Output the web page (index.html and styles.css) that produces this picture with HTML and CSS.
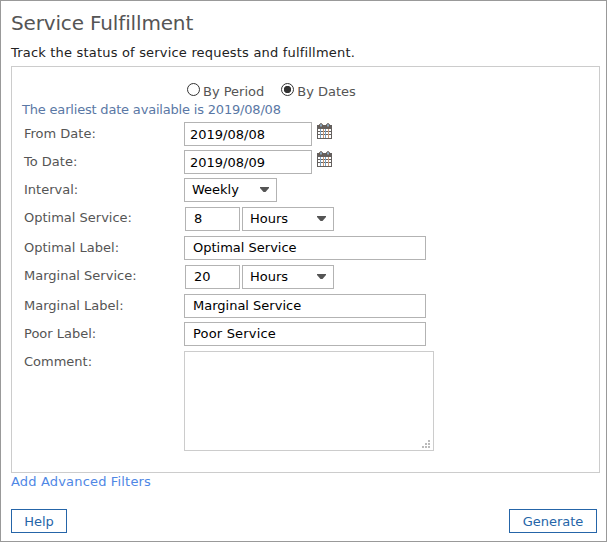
FILE: index.html
```html
<!DOCTYPE html>
<html lang="en">
<head>
<meta charset="utf-8">
<title>Service Fulfillment</title>
<link rel="stylesheet" href="styles.css">
</head>
<body>
<svg class="defs" width="0" height="0">
  <symbol id="calendar" viewBox="0 0 15 16">
    <path d="M0 2h15v14H0z" fill="#64605e"/>
    <path d="M1 6h2v2H1zM4 6h2v2H4zM7 6h1v2H7zM9 6h2v2H9zM12 6h2v2h-2zM1 9h2v2H1zM4 9h2v2H4zM7 9h1v2H7zM9 9h2v2H9zM12 9h2v2h-2zM1 12h2v3H1zM4 12h2v3H4zM7 12h1v3H7zM9 12h2v3H9zM12 12h2v3h-2z" fill="#fff"/>
    <path d="M6 6h1v9H6zM11 6h1v9h-1z" fill="#c99a78"/>
    <path d="M3 6h1v9H3zM8 6h1v9H8z" fill="#7aa2c4"/>
    <path d="M2.5 4V1.5q1.5-2 3 0V4zM9.5 4V1.5q1.5-2 3 0V4z" fill="#8aa9c2" stroke="#685a50"/>
  </symbol>
</svg>
<main class="window">
  <h1>Service Fulfillment</h1>
  <p class="intro">Track the status of service requests and fulfillment.</p>
  <form class="panel">
    <div class="modes">
      <label><span class="radio"></span><span>By Period</span></label>
      <label><span class="radio on"></span><span>By Dates</span></label>
    </div>
    <p class="note">The earliest date available is 2019/08/08</p>
    <div class="row"><span class="name">From Date:</span><span class="field date">2019/08/08</span><svg class="cal"><use href="#calendar"/></svg></div>
    <div class="row"><span class="name">To Date:</span><span class="field date">2019/08/09</span><svg class="cal"><use href="#calendar"/></svg></div>
    <div class="row tall"><span class="name">Interval:</span><span class="field select weekly">Weekly<svg class="arrow" viewBox="0 0 9 5"><path d="M0 0h9v1L5.5 5h-2L0 1z"/></svg></span></div>
    <div class="row tall service"><span class="name">Optimal Service:</span><span class="field number">8</span><span class="field select hours">Hours<svg class="arrow" viewBox="0 0 9 5"><path d="M0 0h9v1L5.5 5h-2L0 1z"/></svg></span></div>
    <div class="row tall"><span class="name">Optimal Label:</span><span class="field text">Optimal Service</span></div>
    <div class="row tall service"><span class="name">Marginal Service:</span><span class="field number">20</span><span class="field select hours">Hours<svg class="arrow" viewBox="0 0 9 5"><path d="M0 0h9v1L5.5 5h-2L0 1z"/></svg></span></div>
    <div class="row"><span class="name">Marginal Label:</span><span class="field text">Marginal Service</span></div>
    <div class="row tall"><span class="name">Poor Label:</span><span class="field text poor">Poor Service</span></div>
    <div class="row service comment"><span class="name">Comment:</span><span class="area"><svg class="grip" viewBox="0 0 8 8"><path d="M6 0h2v2H6zM3 3h2v2H3zM6 3h2v2H6zM0 6h2v2H0zM3 6h2v2H3zM6 6h2v2H6z"/></svg></span></div>
  </form>
  <a class="filters">Add Advanced Filters</a>
  <footer><button class="help">Help</button><button class="generate">Generate</button></footer>
</main>
</body>
</html>
```
FILE: styles.css
```css
* { box-sizing: border-box; }
body { margin: 0; background: #fff; font: 13px/16px "DejaVu Sans", Verdana, sans-serif; color: #555; white-space: nowrap; }
.defs { display: block; position: absolute; }
.window { width: 607px; height: 542px; border: 1px solid #999; padding: 8px 6px 0 10px; }
h1 { margin: 0; font-size: 20px; line-height: 28px; font-weight: 400; letter-spacing: -0.15px; }
.intro { margin: 7px 0 6px; line-height: 18px; height: 16px; color: #222; letter-spacing: 0.19px; }
.panel { width: 589px; height: 407px; border: 1px solid #ccc; padding: 16px 0 0 12px; }
.modes { display: flex; gap: 17px; height: 18px; padding-left: 163px; }
.modes label { display: flex; gap: 3px; line-height: 18px; }
.radio { width: 13px; height: 13px; border: 1px solid #333; border-radius: 50%; background: #fff; }
.radio.on { background: radial-gradient(circle, #333 0 3.4px, #fff 4px); }
.note { margin: 0 0 4px -2px; line-height: 17px; color: #5a78a5; letter-spacing: -0.19px; }
.row { display: flex; height: 28px; }
.row.tall { height: 29px; }
.name { width: 160px; line-height: 24px; }
.service .name { line-height: 22px; }
.service .number { margin-left: 1px; }
.field { height: 24px; border: 1px solid #b3b3b3; padding-left: 8px; line-height: 21px; color: #000; }
.date { width: 128px; padding-left: 5px; line-height: 23px; }
.cal { width: 15px; height: 16px; margin: 1px 0 0 5px; }
.text { width: 242px; }
.poor { letter-spacing: 0.18px; }
.number { width: 55px; }
.select { display: flex; justify-content: space-between; padding: 0 7px; }
.weekly { width: 93px; }
.hours { width: 92px; margin-left: 2px; }
.arrow { width: 9px; height: 5px; margin-top: 8px; fill: #555; }
.comment { height: 100px; }
.area { display: flex; width: 250px; height: 100px; border: 1px solid #ccc; justify-content: flex-end; align-items: flex-end; padding: 2px 3px; }
.grip { width: 8px; height: 8px; fill: #bbb; }
.filters { display: block; line-height: 17px; color: #4f87e5; letter-spacing: 0.17px; }
footer { display: flex; justify-content: space-between; margin: 19px 3px 0 0; }
button { height: 24px; border: 1px solid #2565a8; background: #fff; color: #2565a8; font: inherit; padding: 2px 0 0; }
.help { width: 56px; }
.generate { width: 88px; }
```
